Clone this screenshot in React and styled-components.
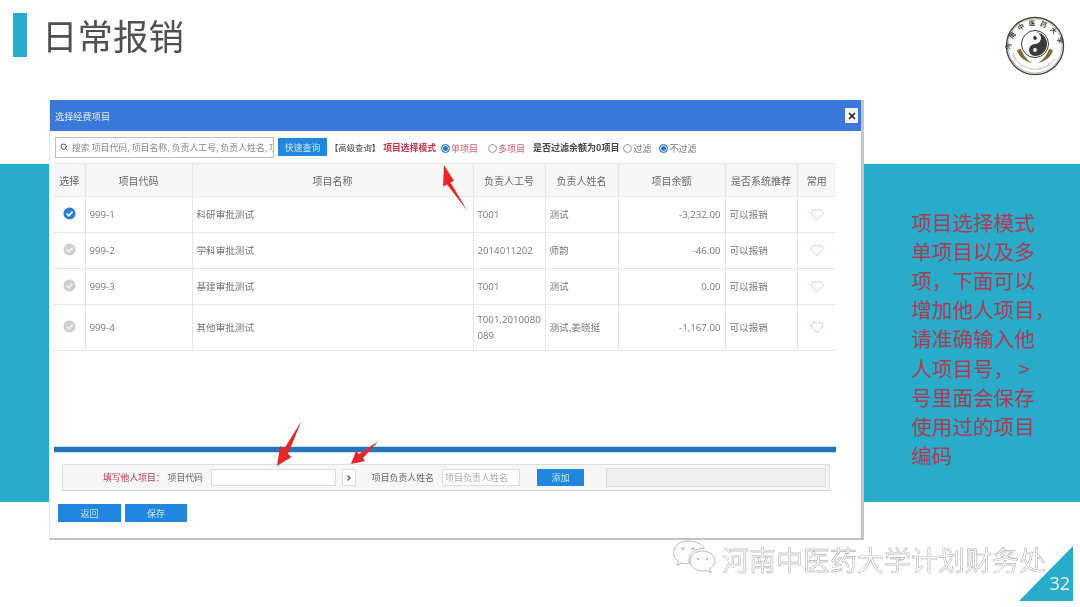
import React from "react";
import styled, { createGlobalStyle } from "styled-components";
import { Heart, Search, ChevronRight, X } from "lucide-react";

const FONT = `"Noto Sans CJK SC", "Open Sans", "Liberation Sans", sans-serif`;
const TEAL = "#29abca";

const Global = createGlobalStyle`
  html, body { margin: 0; padding: 0; background: #fff; }
  * { box-sizing: border-box; }
`;

const Slide = styled.div`
  position: relative;
  width: 1080px;
  height: 607px;
  overflow: hidden;
  background: #fff;
  font-family: ${FONT};
  filter: blur(0.4px);
`;
const Header = styled.header`
  display: flex;
  align-items: center;
  justify-content: space-between;
  height: 44px;
  margin: 13px 0 0 13px;
  position: relative;
`;
const TitleGroup = styled.div`
  display: flex;
  align-items: center;
  gap: 15px;
`;
const TitleBar = styled.div`
  width: 14px;
  height: 44px;
  background: ${TEAL};
`;
const Title = styled.h1`
  margin: 0;
  font-size: 35.5px;
  line-height: 44px;
  font-weight: 400;
  color: #505050;
`;
const Logo = styled.svg`
  position: absolute;
  left: 991px;
  top: 1px;
`;
const Band = styled.section`
  display: flex;
  justify-content: flex-end;
  align-items: center;
  height: 338px;
  margin-top: 107px;
  padding: 12px 45px 0 0;
  background: ${TEAL};
`;
const Note = styled.p`
  width: 124px;
  margin: 0;
  font-size: 20.6px;
  line-height: 29.2px;
  color: #ad3a50;
  white-space: nowrap;
`;
const Footer = styled.footer`
  display: flex;
  align-items: flex-start;
  height: 105px;
  padding: 38px 0 0 672px;
`;
const FooterName = styled.div`
  margin: 3px 0 0 6px;
  font-size: 27px;
  line-height: 34px;
  width: 323px;
  white-space: nowrap;
  color: #fbfbfb;
  -webkit-text-stroke: 0.4px #959595;
`;
const Corner = styled.div`
  width: 54px;
  height: 55px;
  margin: 6px 0 0 -26px;
  background: ${TEAL};
  clip-path: polygon(100% 0, 100% 100%, 0 100%);
  display: flex;
  align-items: flex-end;
  justify-content: flex-end;
  padding: 0 3px 7px 0;
  color: #e8f6fa;
  font-size: 18px;
  line-height: 22px;
  font-family: "Open Sans", sans-serif;
`;

const Dialog = styled.div`
  position: absolute;
  left: 49px;
  top: 100px;
  width: 815px;
  height: 440px;
  display: flex;
  flex-direction: column;
  background: #fff;
  border-right: 3px solid #c6c6c6;
  border-bottom: 2px solid #c2c2c2;
  border-left: 1px solid #d8eef5;
  padding-bottom: 16px;
  filter: blur(0.35px);
`;
const DialogHead = styled.div`
  display: flex;
  align-items: center;
  justify-content: space-between;
  height: 31px;
  flex: none;
  padding: 0 3px 0 5px;
  background: #3a79d9;
  color: #e6efff;
  font-size: 9.2px;
`;
const CloseBtn = styled.span`
  display: flex;
  align-items: center;
  justify-content: center;
  width: 13px;
  height: 15px;
  background: #f2f2f2;
  color: #222;
`;
const Toolbar = styled.div`
  display: flex;
  align-items: center;
  height: 32px;
  flex: none;
  padding-left: 5px;
  font-size: 9px;
  color: #555;
  white-space: nowrap;
`;
const SearchBox = styled.div`
  display: flex;
  align-items: center;
  gap: 4px;
  width: 219px;
  height: 21px;
  padding-left: 4px;
  border: 1px solid #bdbdbd;
  overflow: hidden;
  font-size: 8.9px;
  color: #888;
  svg { flex: none; color: #555; }
`;
const Btn = styled.span`
  display: flex;
  align-items: center;
  justify-content: center;
  flex: none;
  width: ${(p) => p.$w}px;
  height: ${(p) => p.$h || 18}px;
  margin-left: ${(p) => p.$ml || 0}px;
  background: #2186de;
  color: #cfe6fa;
  font-size: 9px;
`;
const Label = styled.span`
  flex: none;
  margin-left: ${(p) => p.$ml || 0}px;
  color: ${(p) => (p.$red ? "#c0344a" : p.$dark ? "#444" : "#666")};
  font-size: ${(p) => p.$fs || 9}px;
  font-weight: ${(p) => (p.$bold ? 600 : 400)};
`;
const Radio = styled.span`
  display: flex;
  align-items: center;
  flex: none;
  margin-left: ${(p) => p.$ml}px;
  color: ${(p) => (p.$red ? "#cf5a6a" : "#778")};
  font-size: 9px;
  padding-top: 2px;
  &::before {
    content: "";
    width: 7px;
    height: 7px;
    margin-right: 1px;
    border-radius: 50%;
    border: 1px solid ${(p) => (p.$on ? "#2a78cc" : "#999")};
    background: ${(p) => (p.$on ? "#2a78cc" : "#fff")};
    box-shadow: ${(p) => (p.$on ? "inset 0 0 0 1px #fff" : "none")};
  }
`;
const Table = styled.table`
  width: 782px;
  margin-left: 4px;
  flex: none;
  border-collapse: collapse;
  table-layout: fixed;
  font-size: 9.6px;
  color: #777;
`;
const Th = styled.th`
  height: 33px;
  padding: 0;
  background: #f7f7f7;
  border: 1px solid #e6e6e6;
  border-left: ${(p) => (p.$first ? "0" : "1px solid #e6e6e6")};
  border-right: 0;
  font-weight: 400;
  font-size: 10px;
  color: #666;
  text-align: center;
`;
const Td = styled.td`
  height: ${(p) => p.$h}px;
  padding: 0 ${(p) => (p.$right ? 4 : p.$center ? 0 : 2)}px 2px ${(p) => (p.$center ? 0 : 4)}px;
  border: 1px solid #e6e6e6;
  border-left: ${(p) => (p.$first ? "0" : "1px solid #e6e6e6")};
  border-right: 0;
  text-align: ${(p) => (p.$right ? "right" : p.$center ? "center" : "left")};
  line-height: 14px;
  word-break: break-all;
  svg { display: block; margin: 0 auto; }
`;
const Num = styled.span`
  font-family: "Open Sans", sans-serif;
  font-size: 9.7px;
  color: #777;
  vertical-align: -1px;
`;
const Rule = styled.div`
  flex: none;
  width: 782px;
  height: 5px;
  margin: auto 0 0 4px;
  background: #2773bd;
  box-shadow: 0 -1px 0 #bfe3f2, 0 1px 0 #bfe3f2;
`;
const FormBar = styled.div`
  display: flex;
  align-items: center;
  flex: none;
  width: 768px;
  height: 27px;
  margin: 12px 0 0 12px;
  padding-left: 40px;
  background: #f6f6f6;
  border: 1px solid #dedede;
  border-bottom-color: #d2d2d2;
  white-space: nowrap;
`;
const Field = styled.div`
  flex: none;
  width: ${(p) => p.$w}px;
  height: 17px;
  margin-left: ${(p) => p.$ml}px;
  padding-left: 2px;
  background: #fff;
  border: 1px solid #dcdcdc;
  font-size: 9px;
  line-height: 15px;
  color: #aaa;
`;
const StepBtn = styled.span`
  display: flex;
  align-items: center;
  justify-content: center;
  flex: none;
  width: 14px;
  height: 17px;
  margin-left: 6px;
  background: #fff;
  border: 1px solid #ddd;
  color: #555;
`;
const ReadOnly = styled.div`
  flex: none;
  width: 220px;
  height: 19px;
  margin-left: 22px;
  background: #efefef;
  border: 1px solid #dcdcdc;
`;
const Actions = styled.div`
  display: flex;
  gap: 4px;
  flex: none;
  margin: 13px 0 0 8px;
`;
const Arrow = styled.svg`
  position: absolute;
  left: 0;
  top: 0;
  pointer-events: none;
`;

const Check = ({ on }) => (
  <svg width="13" height="13" viewBox="0 0 12 12">
    <circle cx="6" cy="6" r="5.6" fill={on ? "#2a7fd2" : "#cfcfcf"} />
    <path d="M3.3 6.2 5.3 8.1 8.8 4.2" fill="none" stroke={on ? "#fff" : "#f2f2f2"} strokeWidth="1.6" />
  </svg>
);

const rows = [
  { h: 36, code: "999-1", name: "科研审批测试", no: "T001", person: "测试", amt: "-3,232.00", on: true },
  { h: 36, code: "999-2", name: "学科审批测试", no: "2014011202", person: "师韵", amt: "-46.00" },
  { h: 36, code: "999-3", name: "基建审批测试", no: "T001", person: "测试", amt: "0.00" },
  { h: 46, code: "999-4", name: "其他审批测试", no: "T001,2010080089", person: "测试,姜晓挺", amt: "-1,167.00" },
];
const cols = [31, 107, 281, 72, 73, 107, 72, 39];
const heads = ["选择", "项目代码", "项目名称", "负责人工号", "负责人姓名", "项目余额", "是否系统推荐", "常用"];
const noteLines = ["项目选择模式", "单项目以及多", "项，下面可以", "增加他人项目，", "请准确输入他", "人项目号， >", "号里面会保存", "使用过的项目", "编码"];

const UniLogo = () => (
  <Logo width="62" height="64" viewBox="0 0 62 64">
    <defs>
      <path id="arc" d="M6.500 36 A24.500 24.500 0 0 1 55.500 36" />
      <path id="arcb" d="M8 40 A24.500 24.500 0 0 0 54 40" />
    </defs>
    <circle cx="31" cy="32" r="28.5" fill="#fff" stroke="#4a4237" strokeWidth="1.4" />
    <circle cx="31" cy="32" r="27" fill="none" stroke="#8a8274" strokeWidth="0.5" />
    <text fontFamily={FONT} fontSize="6.400" fontWeight="700" fill="#3d3a33" letterSpacing="4.300">
      <textPath href="#arc">河南中医药大学</textPath>
    </text>
    <text fontFamily="Liberation Sans, sans-serif" fontSize="2.400" fill="#777" letterSpacing="0.100">
      <textPath href="#arcb">HENAN UNIVERSITY OF CHINESE MEDICINE</textPath>
    </text>
    <circle cx="31" cy="30" r="13.500" fill="#fff" stroke="#3a3a36" strokeWidth="1" />
    <path d="M31 18a12 12 0 0 1 0 24a6 6 0 0 1 0-12a6 6 0 0 0 0-12z" fill="#3a3a36" />
    <circle cx="31" cy="24" r="1.900" fill="#3a3a36" />
    <circle cx="31" cy="36" r="1.900" fill="#fff" />
    <path d="M13 36c2 7 7 11 15 13c-5-3-9-8-11-14z" fill="#7c6a3e" />
    <path d="M49 36c-2 7-7 11-15 13c5-3 9-8 11-14z" fill="#7c6a3e" />
  </Logo>
);

const WeChat = () => (
  <svg width="44" height="36" viewBox="0 0 44 36" fill="#fdfdfd" stroke="#bbb" strokeWidth="1">
    <path d="M16 1C8 1 1.500 6 1.500 12.500c0 3.600 2 6.600 5 8.800l-1.500 4 5-2.400c1.800.5 3.700.8 5.500.8 1 0 1.400 0 2-.1-.4-1.300-.6-2.300-.6-3.500 0-6.500 6-11.600 14-11.600.6 0 1 0 1.500.1C30.500 4.400 24 1 16 1z" />
    <path d="M43 21c0-5.700-5.700-10-12.500-10S18 15.300 18 21s5.700 10 12.500 10c1.500 0 2.900-.2 4.200-.6l4.300 2.300-1.200-3.700C41 27 43 24.200 43 21z" />
    <circle cx="11" cy="8.500" r="1.500" fill="#c0c0c0" stroke="none" />
    <circle cx="21" cy="8.500" r="1.500" fill="#c0c0c0" stroke="none" />
    <circle cx="26" cy="19" r="1.200" fill="#c0c0c0" stroke="none" />
    <circle cx="35" cy="19" r="1.200" fill="#c0c0c0" stroke="none" />
  </svg>
);

export default function App() {
  return (
    <>
      <Global />
      <Slide>
        <Header>
          <TitleGroup>
            <TitleBar />
            <Title>日常报销</Title>
          </TitleGroup>
          <UniLogo />
        </Header>
        <Band>
          <Note>
            {noteLines.map((l) => (
              <React.Fragment key={l}>
                {l}
                <br />
              </React.Fragment>
            ))}
          </Note>
        </Band>
        <Footer>
          <WeChat />
          <FooterName>河南中医药大学计划财务处</FooterName>
          <Corner>32</Corner>
        </Footer>

        <Dialog>
          <DialogHead>
            选择经费项目
            <CloseBtn>
              <X size={10} strokeWidth={4} />
            </CloseBtn>
          </DialogHead>
          <Toolbar>
            <SearchBox>
              <Search size={8} strokeWidth={3} />
              搜索 项目代码, 项目名称, 负责人工号, 负责人姓名, 项
            </SearchBox>
            <Btn $w={49} $ml={4}>快速查询</Btn>
            <Label $ml={3} $dark $fs={8.4}>【高级查询】</Label>
            <Label $ml={3} $red $fs={8.8} $bold>项目选择模式</Label>
            <Radio $ml={5} $on $red>单项目</Radio>
            <Radio $ml={10} $red>多项目</Radio>
            <Label $ml={8} $dark $bold>是否过滤余额为0项目</Label>
            <Radio $ml={4}>过滤</Radio>
            <Radio $ml={8} $on>不过滤</Radio>
          </Toolbar>
          <Table>
            <colgroup>
              {cols.map((w, i) => (
                <col key={i} width={w} />
              ))}
            </colgroup>
            <thead>
              <tr>
                {heads.map((h, i) => (
                  <Th key={h} $first={i === 0}>{h}</Th>
                ))}
              </tr>
            </thead>
            <tbody>
              {rows.map((r) => (
                <tr key={r.code}>
                  <Td $h={r.h} $first $center><Check on={r.on} /></Td>
                  <Td $h={r.h}><Num>{r.code}</Num></Td>
                  <Td $h={r.h}>{r.name}</Td>
                  <Td $h={r.h}><Num>{r.no}</Num></Td>
                  <Td $h={r.h}>{r.person}</Td>
                  <Td $h={r.h} $right><Num>{r.amt}</Num></Td>
                  <Td $h={r.h}>可以报销</Td>
                  <Td $h={r.h} $center><Heart size={14} color="#e8c4c4" strokeWidth={1.7} /></Td>
                </tr>
              ))}
            </tbody>
          </Table>
          <Rule />
          <FormBar>
            <Label $red $fs={8.8}>填写他人项目：</Label>
            <Label $ml={3} $fs={8.8}>项目代码</Label>
            <Field $w={125} $ml={8} />
            <StepBtn><ChevronRight size={8} strokeWidth={4} /></StepBtn>
            <Label $ml={16} $fs={8.9}>项目负责人姓名</Label>
            <Field $w={78} $ml={8}>项目负责人姓名</Field>
            <Btn $w={47} $h={17} $ml={17}>添加</Btn>
            <ReadOnly />
          </FormBar>
          <Actions>
            <Btn $w={63}>返回</Btn>
            <Btn $w={62}>保存</Btn>
          </Actions>
        </Dialog>

        <Arrow width="1080" height="607" viewBox="0 0 1080 607">
          <path d="M444 165 L454 181 L450.500 182.500 L467.500 211 L447 184.500 L443 186.500 Z" fill="#e8262a" />
          <path d="M277 466 L280 446 L284 449 L301.500 421 L288 454 L291.500 457 Z" fill="#e8262a" />
          <path d="M351 464 L356 451 L359 454 L378.500 441 L363 458 L365 461 Z" fill="#e8262a" />
        </Arrow>
      </Slide>
    </>
  );
}
